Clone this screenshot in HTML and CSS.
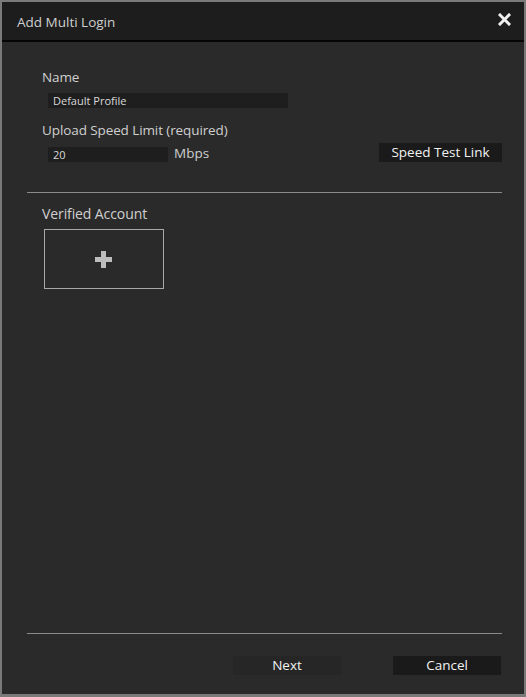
FILE: index.html
```html
<!DOCTYPE html>
<html>
<head>
<meta charset="utf-8">
<link rel="stylesheet" href="styles.css">
</head>
<body>
<div class="dialog">
  <div class="titlebar">
    <span class="title">Add Multi Login</span>
    <svg class="close" width="13" height="13" viewBox="0 0 13 13"><path d="M2 2 L11 11 M11 2 L2 11" stroke="#f0f0f0" stroke-width="3" stroke-linecap="square"/></svg>
  </div>
  <div class="body">
    <div class="section">
      <div class="label">Name</div>
      <div class="input wide">Default Profile</div>
      <div class="label label2">Upload Speed Limit (required)</div>
      <div class="speedrow">
        <div class="input narrow">20</div>
        <span class="unit">Mbps</span>
        <span class="spacer"></span>
        <button class="btn dark">Speed Test Link</button>
      </div>
    </div>
    <div class="divider"></div>
    <div class="section2">
      <div class="label big">Verified Account</div>
      <div class="addbox">
        <svg width="19" height="19" viewBox="0 0 19 19"><path d="M9.5 1 V18 M1 9.5 H18" stroke="#bdbdbd" stroke-width="5"/></svg>
      </div>
    </div>
    <div class="fill"></div>
    <div class="divider"></div>
    <div class="footer">
      <button class="btn next">Next</button>
      <button class="btn dark cancel">Cancel</button>
    </div>
  </div>
</div>
</body>
</html>
```
FILE: styles.css
```css
html, body { margin: 0; padding: 0; }
body {
  width: 526px; height: 697px;
  background: #7a7a7a;
  font-family: "Open Sans", "Noto Sans", sans-serif;
  color: #cfcfcf;
}
.dialog {
  box-sizing: border-box;
  width: 526px; height: 697px;
  border-style: solid;
  border-color: #7a7a7a;
  border-width: 2px 2px 3px 2px;
  display: flex; flex-direction: column;
  background: #2a2a2a;
}
.titlebar {
  height: 38px;
  background: #1d1d1d;
  border-bottom: 2px solid #050505;
  display: flex; align-items: center;
  padding: 0 13px 0 15px;
  flex: none;
}
.title { font-size: 13.5px; color: #cfcfcf; flex: 1; padding-top: 2px; }
.close { display: block; margin-top: -4px; }
.body { flex: 1; display: flex; flex-direction: column; padding: 0 22px 0 25px; }
.section { padding: 26px 0 0 15px; }
.label { font-size: 13.5px; line-height: 18px; color: #cfcfcf; letter-spacing: -0.1px; }
.label2 { margin-top: 13px; }
.input {
  background: #1e1e1e;
  height: 15px;
  font-size: 11px; line-height: 15px;
  color: #d8d8d8;
  padding-left: 5px;
  box-sizing: border-box;
  margin-left: 6px;
}
.input.wide { width: 240px; margin-top: 7px; }
.speedrow { display: flex; align-items: center; margin-top: 4px; }
.input.narrow { width: 120px; margin-top: 3px; }
.unit { font-size: 13.5px; margin-left: 6px; }
.spacer { flex: 1; }
.btn {
  font-family: "Open Sans", "Noto Sans", sans-serif;
  border: none; color: #f2f2f2;
  font-size: 13.5px; height: 19px; padding: 0;
  line-height: 19px;
}
.btn.dark { background: #1a1a1a; }
.speedrow .btn { width: 123px; }
.divider { height: 1px; background: #8a8a8a; flex: none; }
.section > :last-child { margin-bottom: 30px; }
.section2 { padding: 12px 0 0 15px; }
.big { font-size: 14px; }
.addbox {
  margin-top: 6px; margin-left: 2px;
  width: 118px; height: 58px;
  border: 1px solid #a8a8a8;
  display: flex; align-items: center; justify-content: center;
}
.addbox svg { margin-left: -2px; }
.fill { flex: 1; }
.footer { display: flex; justify-content: flex-end; gap: 52px; padding: 22px 1px 19px 0; }
.next { background: #262626; width: 108px; }
.cancel { width: 108px; }
```
